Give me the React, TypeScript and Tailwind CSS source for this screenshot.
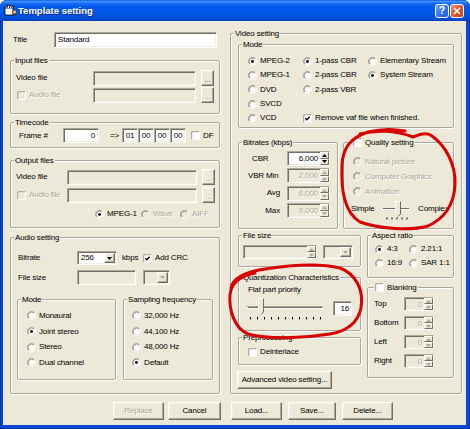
import React from "react";

const sunken =
  "border border-t-[#ACA899] border-l-[#ACA899] border-b-white border-r-white shadow-[inset_1px_1px_0_#716F64,inset_-1px_-1px_0_#F1EFE2]";
const raised =
  "border border-t-white border-l-white border-b-[#716F64] border-r-[#716F64] shadow-[inset_-1px_-1px_0_#ACA899,inset_1px_1px_0_#F1EFE2]";
const raisedThin = "border border-t-white border-l-white border-b-[#716F64] border-r-[#716F64]";
const dis = "text-[#ACA899] [text-shadow:1px_1px_0_#ffffff]";

function RadioIcon({ checked = false, disabled = false }: { checked?: boolean; disabled?: boolean }) {
  return (
    <svg width="9" height="9" viewBox="0 0 12 12" className="shrink-0">
      <circle cx="6" cy="6" r="4.3" fill={disabled ? "#ECE9D8" : "#ffffff"} />
      <path d="M2.1 9.9A5.5 5.5 0 0 1 9.9 2.1" fill="none" stroke="#ACA899" strokeWidth="1" />
      <path d="M9.9 2.1A5.5 5.5 0 0 1 2.1 9.9" fill="none" stroke="#ffffff" strokeWidth="1" />
      <path d="M2.8 9.2A4.5 4.5 0 0 1 9.2 2.8" fill="none" stroke="#716F64" strokeWidth="1" />
      <path d="M9.2 2.8A4.5 4.5 0 0 1 2.8 9.2" fill="none" stroke="#F1EFE2" strokeWidth="1" />
      {checked && <circle cx="6" cy="6" r="1.9" fill={disabled ? "#ACA899" : "#000000"} />}
    </svg>
  );
}

function CheckIcon({ checked = false, disabled = false }: { checked?: boolean; disabled?: boolean }) {
  return (
    <svg width="9" height="9" viewBox="0 0 13 13" className="shrink-0">
      <rect x="0" y="0" width="13" height="13" fill="#ffffff" />
      <path d="M0.5 12.5V0.5H12.5" stroke="#ACA899" fill="none" />
      <path d="M1.5 11.5V1.5H11.5" stroke="#716F64" fill="none" />
      <path d="M1.5 11.5H11.5V1.5" stroke="#F1EFE2" fill="none" />
      <rect x="2" y="2" width="9" height="9" fill={disabled ? "#ECE9D8" : "#ffffff"} />
      {checked && <path d="M3.3 6.2L5.4 8.3L9.7 4" stroke="#000000" strokeWidth="1.9" fill="none" />}
    </svg>
  );
}

function Arrow({ up = false, disabled = false }: { up?: boolean; disabled?: boolean }) {
  return (
    <svg width="5" height="3" viewBox="0 0 5 3" className="shrink-0 overflow-visible">
      <path d={up ? "M0 3L2.5 0L5 3Z" : "M0 0L5 0L2.5 3Z"} fill={disabled ? "#ACA899" : "#000000"} />
    </svg>
  );
}

function Radio({
  label,
  checked = false,
  disabled = false,
  className = "",
}: {
  label: string;
  checked?: boolean;
  disabled?: boolean;
  className?: string;
}) {
  return (
    <div className={`flex items-center ${className}`}>
      <RadioIcon checked={checked} disabled={disabled} />
      <span className={`ml-[3px] whitespace-nowrap ${disabled ? dis : ""}`}>{label}</span>
    </div>
  );
}

function Check({
  label,
  checked = false,
  disabled = false,
  className = "",
}: {
  label: string;
  checked?: boolean;
  disabled?: boolean;
  className?: string;
}) {
  return (
    <div className={`flex items-center ${className}`}>
      <CheckIcon checked={checked} disabled={disabled} />
      <span className={`ml-[3px] whitespace-nowrap ${disabled ? dis : ""}`}>{label}</span>
    </div>
  );
}

function SpinEdit({ value = "", disabled = false, className = "" }: { value?: string; disabled?: boolean; className?: string }) {
  return (
    <div className={`${sunken} ${disabled ? "bg-[#ECE9D8]" : "bg-white"} flex ${className}`}>
      <div className={`flex-1 flex items-center justify-end pr-[2px] pt-[1px] ${disabled ? dis : ""}`}>{value}</div>
      <div className="w-[9px] flex flex-col">
        <div className={`${raisedThin} bg-[#ECE9D8] flex-1 flex items-center justify-center`}>
          <Arrow up disabled={disabled} />
        </div>
        <div className={`${raisedThin} bg-[#ECE9D8] flex-1 flex items-center justify-center`}>
          <Arrow disabled={disabled} />
        </div>
      </div>
    </div>
  );
}

function Combo({ value = "", disabled = false, className = "" }: { value?: string; disabled?: boolean; className?: string }) {
  return (
    <div className={`${sunken} ${disabled ? "bg-[#ECE9D8]" : "bg-white"} flex ${className}`}>
      <div className="flex-1 pl-[3px] flex items-center">{value}</div>
      <div className={`${raised} bg-[#ECE9D8] w-[11px] m-[1px] flex items-center justify-center`}>
        <Arrow disabled={disabled} />
      </div>
    </div>
  );
}

function Btn({ children, disabled = false, className = "" }: { children: React.ReactNode; disabled?: boolean; className?: string }) {
  return (
    <div className={`${raised} bg-[#ECE9D8] flex items-center justify-center whitespace-nowrap ${disabled ? dis : ""} ${className}`}>
      {children}
    </div>
  );
}

function Dots({ disabled = false, className = "" }: { disabled?: boolean; className?: string }) {
  return (
    <div className={`${raised} bg-[#ECE9D8] w-[13px] h-[16px] flex items-end justify-center pb-[1px] leading-[8px] ${disabled ? dis : "text-[#555]"} ${className}`}>
      ...
    </div>
  );
}

function Group({
  label,
  className = "",
  labelCls = "ml-[3px]",
  children,
}: {
  label: React.ReactNode;
  className?: string;
  labelCls?: string;
  children?: React.ReactNode;
}) {
  return (
    <div
      className={`border border-[#ACA899] rounded-[2px] shadow-[inset_1px_1px_0_#ffffff,1px_1px_0_#ffffff] flex flex-col ${className}`}
    >
      <div className={`-mt-[5px] self-start px-[1px] h-[9px] leading-[9px] w-fit bg-[#ECE9D8] flex items-center whitespace-nowrap ${labelCls}`}>
        {label}
      </div>
      {children}
    </div>
  );
}

function SmallSlider() {
  return (
    <svg width="26" height="20" viewBox="0 0 26 20" className="shrink-0">
      <line x1="0" y1="8.5" x2="26" y2="8.5" stroke="#716F64" strokeWidth="1" />
      <line x1="0" y1="9.5" x2="26" y2="9.5" stroke="#ffffff" strokeWidth="1" />
      <path d="M12 1H18V14L15 17L12 14Z" fill="#ECE9D8" />
      <path d="M12.5 14V1.5H17.5" fill="none" stroke="#ffffff" />
      <path d="M17.5 1.5V14L15 16.6" fill="none" stroke="#716F64" />
      {[4, 9, 14, 19, 24].map((x) => (
        <line key={x} x1={x} y1="17.5" x2={x} y2="19.5" stroke="#000000" strokeWidth="1" />
      ))}
    </svg>
  );
}

function BigSlider() {
  return (
    <svg width="78" height="24" viewBox="0 0 78 24" className="shrink-0">
      <line x1="0" y1="9.5" x2="76" y2="9.5" stroke="#ACA899" />
      <line x1="1" y1="10.5" x2="75" y2="10.5" stroke="#716F64" />
      <line x1="0" y1="11.5" x2="76" y2="11.5" stroke="#ffffff" />
      <path d="M11 1H17V15L14 18L11 15Z" fill="#ECE9D8" />
      <path d="M11.5 15V1.5H16.5" fill="none" stroke="#ffffff" />
      <path d="M16.5 1.5V15L14 17.6" fill="none" stroke="#716F64" />
      {Array.from({ length: 11 }).map((_, i) => (
        <line key={i} x1={3.5 + i * 7} y1="20" x2={3.5 + i * 7} y2="22.5" stroke="#000000" strokeWidth="1" />
      ))}
    </svg>
  );
}

function TitleIcon() {
  return (
    <svg width="13" height="13" viewBox="0 0 13 13" className="shrink-0">
      <rect x="1" y="4" width="8" height="7" fill="#ffffff" stroke="#000000" strokeWidth="0.8" />
      <path d="M1 4L3 1L10 2.5L9 4" fill="#ffffff" stroke="#000000" strokeWidth="0.8" />
      <path d="M3.5 1.5L3 4M6 2L5.3 4M8.3 2.3L7.6 4" stroke="#000000" strokeWidth="1" />
      <circle cx="10.5" cy="8" r="2" fill="#E8C070" stroke="#3A2A10" strokeWidth="0.6" />
      <path d="M9 12L10.5 10L12 12" stroke="#3A2A10" strokeWidth="0.8" fill="none" />
    </svg>
  );
}

export default function App() {
  return (
    <div className="w-[470px] h-[429px] relative overflow-hidden rounded-t-[7px] bg-[#0A48DA] shadow-[inset_1px_0_0_#0830A8,inset_-1px_0_0_#0830A8,inset_0_-1px_0_#0830A8] font-['Liberation_Sans',Arial,sans-serif] text-[8px] leading-[10px] tracking-[-0.15px] text-black select-none">
      {/* Title bar */}
      <div className="h-[21px] flex items-center pl-[4px] pr-[6px] bg-[linear-gradient(180deg,#0A5AE6_0%,#3D94FF_7%,#1C6FF5_15%,#0058EE_32%,#0056E8_62%,#0050DC_82%,#0046CC_94%,#0A3CB8_100%)]">
        <TitleIcon />
        <span className="ml-[1px] text-white font-bold text-[9.5px] tracking-[0px] [text-shadow:1px_1px_0_#0F2A8A]">
          Template setting
        </span>
        <div className="ml-auto flex gap-[1px]">
          <div className="w-[14px] h-[14px] rounded-[3px] border border-white bg-[linear-gradient(135deg,#6FA3FA_0%,#3A78EC_50%,#2259D8_100%)] flex items-center justify-center text-white font-bold text-[10px] leading-[10px]">
            ?
          </div>
          <div className="w-[14px] h-[14px] rounded-[3px] border border-white bg-[linear-gradient(135deg,#F0906A_0%,#E0582F_50%,#C63A18_100%)] flex items-center justify-center">
            <svg width="8" height="8" viewBox="0 0 8 8">
              <path d="M1 1L7 7M7 1L1 7" stroke="#ffffff" strokeWidth="1.6" />
            </svg>
          </div>
        </div>
      </div>

      {/* Body */}
      <div className="ml-[3px] w-[463px] h-[404px] bg-[#ECE9D8] flex flex-col pt-[11px]">
        <div className="flex items-start">
          {/* Left column */}
          <div className="ml-[7px] w-[211px] flex flex-col">
            <div className="flex items-center h-[16px]">
              <span className="pl-[3px] w-[44px]">Title</span>
              <div className={`${sunken} bg-white w-[163px] h-[16px] pl-[3px] flex items-center`}>Standard</div>
            </div>

            <Group label="Input files" className="mt-[12px] w-[210px] h-[54px]">
              <div className="mt-[5px] flex items-center h-[16px]">
                <span className="pl-[5px] w-[82px]">Video file</span>
                <div className={`${sunken} bg-[#ECE9D8] w-[103px] h-[15px]`} />
                <Dots className="ml-[5px]" />
              </div>
              <div className="mt-[1px] flex items-center h-[16px]">
                <Check label="Audio file" disabled className="pl-[6px] w-[82px]" />
                <div className={`${sunken} bg-[#ECE9D8] w-[103px] h-[15px]`} />
                <Dots disabled className="ml-[5px]" />
              </div>
            </Group>

            <Group label="Timecode" className="mt-[8px] w-[210px] h-[26px]">
              <div className="mt-[1px] flex items-center h-[15px]">
                <span className="pl-[8px] w-[52px]">Frame #</span>
                <div className={`${sunken} bg-white w-[36px] h-[15px] pr-[3px] flex items-center justify-end`}>0</div>
                <span className="ml-[11px] w-[12px]">=&gt;</span>
                {["01", "00", "00", "00"].map((t, i) => (
                  <div key={i} className={`${sunken} bg-white w-[16px] h-[15px] flex items-center justify-center`}>
                    {t}
                  </div>
                ))}
                <Check label="DF" className="ml-[5px]" />
              </div>
            </Group>

            <Group label="Output files" className="mt-[12px] w-[210px] h-[68px]">
              <div className="mt-[4px] flex items-center h-[16px]">
                <span className="pl-[5px] w-[56px]">Video file</span>
                <div className={`${sunken} bg-[#ECE9D8] w-[130px] h-[15px]`} />
                <Dots disabled className="ml-[5px]" />
              </div>
              <div className="mt-[2px] flex items-center h-[16px]">
                <Check label="Audio file" disabled className="pl-[6px] w-[56px]" />
                <div className={`${sunken} bg-[#ECE9D8] w-[130px] h-[15px]`} />
                <Dots disabled className="ml-[5px]" />
              </div>
              <div className="mt-[6px] flex items-center h-[10px] pl-[84px]">
                <Radio label="MPEG-1" checked className="w-[46px]" />
                <Radio label="Wave" disabled className="w-[39px]" />
                <Radio label="AIFF" disabled />
              </div>
            </Group>

            <Group label="Audio setting" className="mt-[9px] w-[210px] h-[157px]">
              <div className="mt-[9px] flex items-center h-[14px]">
                <span className="pl-[7px] w-[66px]">Bitrate</span>
                <Combo value="256" className="w-[40px] h-[14px]" />
                <span className="ml-[5px] w-[21px]">kbps</span>
                <Check label="Add CRC" checked />
              </div>
              <div className="mt-[5px] flex items-center h-[15px]">
                <span className="pl-[7px] w-[66px]">File size</span>
                <div className={`${sunken} bg-[#ECE9D8] w-[59px] h-[15px]`} />
                <Combo disabled className="ml-[7px] w-[27px] h-[15px]" />
              </div>
              <div className="mt-[14px] flex">
                <Group label="Mode" className="ml-[6px] w-[99px] h-[81px]">
                  <div className="mt-[4px] flex flex-col pl-[9px]">
                    <Radio label="Monaural" className="h-[15.7px]" />
                    <Radio label="Joint stereo" checked className="h-[15.7px]" />
                    <Radio label="Stereo" className="h-[15.7px]" />
                    <Radio label="Dual channel" className="h-[15.7px]" />
                  </div>
                </Group>
                <Group label="Sampling frequency" className="ml-[7px] w-[90px] h-[81px]">
                  <div className="mt-[4px] flex flex-col pl-[8px]">
                    <Radio label="32,000 Hz" className="h-[15.7px]" />
                    <Radio label="44,100 Hz" className="h-[15.7px]" />
                    <Radio label="48,000 Hz" className="h-[15.7px]" />
                    <Radio label="Default" checked className="h-[15.7px]" />
                  </div>
                </Group>
              </div>
            </Group>
          </div>

          {/* Right column */}
          <Group label="Video setting" className="ml-[9px] mt-[1px] w-[232px] h-[361px]">
            <Group label="Mode" className="ml-[7px] mt-[6px] w-[216px] h-[84px]">
              <div className="mt-[5px] flex flex-col pl-[9px]">
                <div className="flex items-center h-[14.3px]">
                  <Radio label="MPEG-2" checked className="w-[55px]" />
                  <Radio label="1-pass CBR" checked className="w-[65px]" />
                  <Radio label="Elementary Stream" />
                </div>
                <div className="flex items-center h-[14.3px]">
                  <Radio label="MPEG-1" className="w-[55px]" />
                  <Radio label="2-pass CBR" className="w-[65px]" />
                  <Radio label="System Stream" checked />
                </div>
                <div className="flex items-center h-[14.3px]">
                  <Radio label="DVD" className="w-[55px]" />
                  <Radio label="2-pass VBR" className="w-[65px]" />
                </div>
                <div className="flex items-center h-[14.3px]">
                  <Radio label="SVCD" className="w-[55px]" />
                </div>
                <div className="flex items-center h-[14.3px]">
                  <Radio label="VCD" className="w-[55px]" />
                  <Check label="Remove vaf file when finished." checked />
                </div>
              </div>
            </Group>

            <div className="mt-[14px] flex">
              <Group label="Bitrates (kbps)" className="ml-[7px] w-[100px] h-[87px]">
                <div className="mt-[4px] flex flex-col gap-[2.4px]">
                  <div className="flex items-center h-[15px]">
                    <span className="w-[48px] pl-[13px]">CBR</span>
                    <SpinEdit value="6,000" className="w-[43px] h-[15px]" />
                  </div>
                  <div className="flex items-center h-[15px]">
                    <span className="w-[48px] pl-[9px]">VBR Min</span>
                    <SpinEdit value="2,000" disabled className="w-[43px] h-[15px]" />
                  </div>
                  <div className="flex items-center h-[15px]">
                    <span className="w-[48px] pr-[7px] text-right">Avg</span>
                    <SpinEdit value="6,000" disabled className="w-[43px] h-[15px]" />
                  </div>
                  <div className="flex items-center h-[15px]">
                    <span className="w-[48px] pr-[7px] text-right">Max</span>
                    <SpinEdit value="9,000" disabled className="w-[43px] h-[15px]" />
                  </div>
                </div>
              </Group>

              <Group
                label={<Check label="Quality setting" />}
                labelCls="ml-[8px]"
                className="ml-[5px] w-[111px] h-[87px]"
              >
                <div className="mt-[7px] flex flex-col pl-[9px]">
                  <Radio label="Natural picture" disabled className="h-[15px]" />
                  <Radio label="Computer Graphics" disabled className="h-[15px]" />
                  <Radio label="Animation" disabled className="h-[15px]" />
                </div>
                <div className="mt-[1px] flex items-start pl-[7px]">
                  <span className="w-[32px] mt-[3px] h-[12px] leading-[12px]">Simple</span>
                  <SmallSlider />
                  <span className="ml-[9px] mt-[3px] h-[12px] leading-[12px]">Complex</span>
                </div>
              </Group>
            </div>

            <div className="mt-[6px] flex">
              <div className="ml-[7px] w-[123px] flex flex-col">
                <Group label="File size" className="w-[123px] h-[32px]">
                  <div className="mt-[5px] flex items-center">
                    <SpinEdit disabled className="ml-[4px] w-[74px] h-[14px]" />
                    <Combo disabled className="ml-[6px] w-[30px] h-[14px]" />
                  </div>
                </Group>
                <Group label="Quantization Characteristics" className="mt-[10px] w-[123px] h-[54px]">
                  <div className="mt-[3px] pl-[9px] h-[10px] leading-[10px]">Flat part priority</div>
                  <div className="mt-[2px] flex items-start pl-[8px]">
                    <BigSlider />
                    <div className={`${sunken} bg-white ml-[8px] mt-[4px] w-[19px] h-[15px] pr-[2px] flex items-center justify-end`}>
                      16
                    </div>
                  </div>
                </Group>
                <Group label="Preprocessing" className="mt-[6px] w-[123px] h-[28px]">
                  <Check label="Deinterlace" className="mt-[5px] pl-[9px] h-[10px]" />
                </Group>
                <Btn className="mt-[6px] -ml-[1px] w-[95px] h-[18px]">Advanced video setting...</Btn>
              </div>

              <div className="ml-[6px] w-[87px] flex flex-col">
                <Group label="Aspect ratio" className="w-[87px] h-[43px]">
                  <div className="mt-[2px] flex flex-col pl-[7px]">
                    <div className="flex items-center h-[14px]">
                      <Radio label="4:3" checked className="w-[34px]" />
                      <Radio label="2.21:1" />
                    </div>
                    <div className="flex items-center h-[14px]">
                      <Radio label="16:9" className="w-[34px]" />
                      <Radio label="SAR 1:1" />
                    </div>
                  </div>
                </Group>
                <Group label={<Check label="Blanking" />} labelCls="ml-[6px]" className="mt-[9px] w-[87px] h-[91px]">
                  <div className="mt-[5px] flex flex-col gap-[5px]">
                    {["Top", "Bottom", "Left", "Right"].map((l) => (
                      <div key={l} className="flex items-center h-[14px] pl-[6px]">
                        <span className="w-[30px]">{l}</span>
                        <SpinEdit value="0" disabled className="w-[30px] h-[14px]" />
                      </div>
                    ))}
                  </div>
                </Group>
              </div>
            </div>
          </Group>
        </div>

        {/* Bottom buttons */}
        <div className="mt-[8px] flex h-[18px]">
          <Btn disabled className="ml-[110px] w-[51px] h-[18px]">Replace</Btn>
          <Btn className="ml-[4px] w-[53px] h-[18px]">Cancel</Btn>
          <Btn className="ml-[10px] w-[51px] h-[18px]">Load...</Btn>
          <Btn className="ml-[6px] w-[48px] h-[18px]">Save...</Btn>
          <Btn className="ml-[6px] w-[51px] h-[18px]">Delete...</Btn>
        </div>
      </div>

      {/* Red hand-drawn annotations */}
      <svg className="absolute left-0 top-0 pointer-events-none" width="470" height="429" viewBox="0 0 470 429">
        <path
          d="M360 134 C375 130,395 130,413 137 C420 134,428 132,432 136 C446 146,456 165,455 185 C454 205,445 218,428 226 C410 231,380 229,360 222 C344 212,341 190,342 165 C343 148,350 138,368 132 C380 129,395 129,405 131"
          fill="none"
          stroke="#D80000"
          strokeWidth="3"
          strokeLinecap="round"
          strokeLinejoin="round"
        />
        <path
          d="M231 288 C233 278,245 272,265 269 C290 265,320 263,340 268 C356 274,364 290,361 308 C358 322,348 331,330 334 C305 338,270 340,248 334 C234 328,229 310,230 295 C231 283,240 276,255 273"
          fill="none"
          stroke="#D80000"
          strokeWidth="3"
          strokeLinecap="round"
          strokeLinejoin="round"
        />
      </svg>
    </div>
  );
}
